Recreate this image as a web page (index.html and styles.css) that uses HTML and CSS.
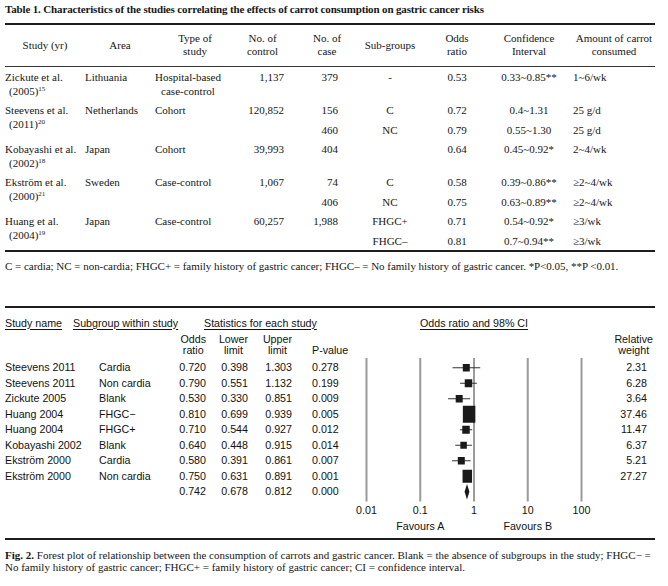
FILE: index.html
```html
<!DOCTYPE html>
<html>
<head>
<meta charset="utf-8">
<title>Carrot consumption and gastric cancer</title>
<link rel="stylesheet" href="styles.css">
</head>
<body>
<section class="t1">
  <h1 class="t1-title">Table 1. Characteristics of the studies correlating the effects of carrot consumption on gastric cancer risks</h1>
  <table class="t1-table">
    <colgroup>
      <col class="w-study"><col class="w-area"><col class="w-type"><col class="w-ctrl"><col class="w-case"><col class="w-sub"><col class="w-or"><col class="w-ci"><col class="w-amt">
    </colgroup>
    <thead>
      <tr>
        <th>Study (yr)</th>
        <th>Area</th>
        <th>Type of<br>study</th>
        <th>No. of<br>control</th>
        <th>No. of<br>case</th>
        <th>Sub-groups</th>
        <th>Odds<br>ratio</th>
        <th>Confidence<br>Interval</th>
        <th class="h-amt">Amount of carrot<br>consumed</th>
      </tr>
    </thead>
    <tbody>
      <tr>
        <td class="study">Zickute et al.<br><span class="yr">(2005)<sup>15</sup></span></td>
        <td>Lithuania</td>
        <td><span class="stack">Hospital-based<br>case-control</span></td>
        <td class="ctrl">1,137</td>
        <td class="case">379</td>
        <td class="c">-</td>
        <td class="c">0.53</td>
        <td class="c">0.33~0.85**</td>
        <td class="amt">1~6/wk</td>
      </tr>
      <tr>
        <td rowspan="2" class="study">Steevens et al.<br><span class="yr">(2011)<sup>20</sup></span></td>
        <td rowspan="2">Netherlands</td>
        <td rowspan="2">Cohort</td>
        <td rowspan="2" class="ctrl">120,852</td>
        <td class="case">156</td>
        <td class="c">C</td>
        <td class="c">0.72</td>
        <td class="c">0.4~1.31</td>
        <td class="amt">25 g/d</td>
      </tr>
      <tr>
        <td class="case">460</td>
        <td class="c">NC</td>
        <td class="c">0.79</td>
        <td class="c">0.55~1.30</td>
        <td class="amt">25 g/d</td>
      </tr>
      <tr>
        <td class="study">Kobayashi et al.<br><span class="yr">(2002)<sup>18</sup></span></td>
        <td>Japan</td>
        <td>Cohort</td>
        <td class="ctrl">39,993</td>
        <td class="case">404</td>
        <td class="c"></td>
        <td class="c">0.64</td>
        <td class="c">0.45~0.92*</td>
        <td class="amt">2~4/wk</td>
      </tr>
      <tr>
        <td rowspan="2" class="study">Ekström et al.<br><span class="yr">(2000)<sup>21</sup></span></td>
        <td rowspan="2">Sweden</td>
        <td rowspan="2">Case-control</td>
        <td rowspan="2" class="ctrl">1,067</td>
        <td class="case">74</td>
        <td class="c">C</td>
        <td class="c">0.58</td>
        <td class="c">0.39~0.86**</td>
        <td class="amt">≥2~4/wk</td>
      </tr>
      <tr>
        <td class="case">406</td>
        <td class="c">NC</td>
        <td class="c">0.75</td>
        <td class="c">0.63~0.89**</td>
        <td class="amt">≥2~4/wk</td>
      </tr>
      <tr>
        <td rowspan="2" class="study">Huang et al.<br><span class="yr">(2004)<sup>19</sup></span></td>
        <td rowspan="2">Japan</td>
        <td rowspan="2">Case-control</td>
        <td rowspan="2" class="ctrl">60,257</td>
        <td class="case">1,988</td>
        <td class="c">FHGC+</td>
        <td class="c">0.71</td>
        <td class="c">0.54~0.92*</td>
        <td class="amt">≥3/wk</td>
      </tr>
      <tr>
        <td class="case"></td>
        <td class="c">FHGC–</td>
        <td class="c">0.81</td>
        <td class="c">0.7~0.94**</td>
        <td class="amt">≥3/wk</td>
      </tr>
    </tbody>
  </table>
  <p class="t1-note">C = cardia; NC = non-cardia; FHGC+ = family history of gastric cancer; FHGC– = No family history of gastric cancer. *P&lt;0.05, **P &lt;0.01.</p>
</section>

<section class="fp">
  <div class="fp-h1">
    <span class="ul">Study name</span>
    <span class="ul">Subgroup within study</span>
    <span class="ul">Statistics for each study</span>
    <span class="ctr"><span class="ul">Odds ratio and 98% CI</span></span>
  </div>
  <div class="fp-h2">
    <div></div>
    <div></div>
    <div class="r"><span class="blk">Odds<br>ratio</span></div>
    <div class="r"><span class="blk">Lower<br>limit</span></div>
    <div class="r"><span class="blk">Upper<br>limit</span></div>
    <div class="p nw">P-value</div>
    <div></div>
    <div class="r"><span class="blk">Relative<br>weight</span></div>
  </div>
  <div class="fp-grid">
    <svg class="fp-plot" width="252" height="139.5" viewBox="0 0 252 139.5" aria-hidden="true">
      <g stroke="#9a9a9a" stroke-width="2">
        <line x1="18.5" y1="-2" x2="18.5" y2="141.5"/>
        <line x1="72.25" y1="-2" x2="72.25" y2="141.5"/>
        <line x1="179.75" y1="-2" x2="179.75" y2="141.5"/>
        <line x1="233.5" y1="-2" x2="233.5" y2="141.5"/>
      </g>
      <line x1="126" y1="-2" x2="126" y2="141.5" stroke="#666" stroke-width="1.3"/>
      <g stroke="#333" stroke-width="1">
        <line x1="104.5" y1="7.75" x2="132.2" y2="7.75"/>
        <line x1="112.1" y1="23.25" x2="128.9" y2="23.25"/>
        <line x1="100.1" y1="38.75" x2="122.2" y2="38.75"/>
        <line x1="117.6" y1="54.25" x2="124.5" y2="54.25"/>
        <line x1="111.8" y1="69.75" x2="124.2" y2="69.75"/>
        <line x1="107.3" y1="85.25" x2="123.9" y2="85.25"/>
        <line x1="104.1" y1="100.75" x2="122.5" y2="100.75"/>
        <line x1="115.3" y1="116.25" x2="123.3" y2="116.25"/>
      </g>
      <g fill="#1a1a1a">
        <rect x="114.8" y="4" width="7" height="7.5"/>
        <rect x="116.75" y="19.25" width="7.5" height="8"/>
        <rect x="107.7" y="35" width="7" height="7.5"/>
        <rect x="114.85" y="45.75" width="12.5" height="17"/>
        <rect x="114.25" y="65.75" width="7.5" height="8"/>
        <rect x="112.35" y="81.75" width="6.5" height="7"/>
        <rect x="109.8" y="97" width="7" height="7.5"/>
        <rect x="114.55" y="109.75" width="9.5" height="13"/>
        <polygon points="116.6,131.75 119,124 121.4,131.75 119,139.5"/>
      </g>
    </svg>

    <div>Steevens 2011</div><div>Cardia</div><div class="r">0.720</div><div class="r">0.398</div><div class="r">1.303</div><div class="p">0.278</div><div class="w">2.31</div>
    <div>Steevens 2011</div><div>Non cardia</div><div class="r">0.790</div><div class="r">0.551</div><div class="r">1.132</div><div class="p">0.199</div><div class="w">6.28</div>
    <div>Zickute 2005</div><div>Blank</div><div class="r">0.530</div><div class="r">0.330</div><div class="r">0.851</div><div class="p">0.009</div><div class="w">3.64</div>
    <div>Huang 2004</div><div>FHGC−</div><div class="r">0.810</div><div class="r">0.699</div><div class="r">0.939</div><div class="p">0.005</div><div class="w">37.46</div>
    <div>Huang 2004</div><div>FHGC+</div><div class="r">0.710</div><div class="r">0.544</div><div class="r">0.927</div><div class="p">0.012</div><div class="w">11.47</div>
    <div>Kobayashi 2002</div><div>Blank</div><div class="r">0.640</div><div class="r">0.448</div><div class="r">0.915</div><div class="p">0.014</div><div class="w">6.37</div>
    <div>Ekström 2000</div><div>Cardia</div><div class="r">0.580</div><div class="r">0.391</div><div class="r">0.861</div><div class="p">0.007</div><div class="w">5.21</div>
    <div>Ekström 2000</div><div>Non cardia</div><div class="r">0.750</div><div class="r">0.631</div><div class="r">0.891</div><div class="p">0.001</div><div class="w">27.27</div>
    <div></div><div></div><div class="r">0.742</div><div class="r">0.678</div><div class="r">0.812</div><div class="p">0.000</div><div class="w"></div>
  </div>
  <div class="fp-axis">
    <div></div>
    <div class="ticks"><span>0.01</span><span>0.1</span><span>1</span><span>10</span><span>100</span></div>
  </div>
  <div class="fp-axis fav">
    <div></div>
    <div class="favours"><span>Favours A</span><span>Favours B</span></div>
  </div>
</section>

<p class="caption"><b>Fig. 2.</b> Forest plot of relationship between the consumption of carrots and gastric cancer. Blank = the absence of subgroups in the study; FHGC− =<br>No family history of gastric cancer; FHGC+ = family history of gastric cancer; CI = confidence interval.</p>
</body>
</html>
```

FILE: styles.css
```css
* { box-sizing: border-box; }
html, body { margin: 0; background: #fff; }
body {
  width: 668px;
  padding: 2px 13px 0 5px;
  color: #161616;
  font-family: "Liberation Serif", "Times New Roman", serif;
}

/* ---------- Table 1 ---------- */
.t1-title {
  font-size: 11px;
  font-weight: bold;
  line-height: 14px;
  letter-spacing: -0.15px;
  margin: 0 0 7px;
}
.t1-table {
  width: 650px;
  table-layout: fixed;
  border-collapse: collapse;
  font-size: 11px;
  line-height: 13.5px;
  border-top: 2px solid #1e1e1e;
  border-bottom: 2px solid #1e1e1e;
}
.w-study { width: 80px; }
.w-area { width: 70px; }
.w-type { width: 80px; }
.w-ctrl { width: 55px; }
.w-case { width: 74px; }
.w-sub { width: 52px; }
.w-or { width: 82px; }
.w-ci { width: 62px; }
.w-amt { width: 95px; }

.t1-table th {
  font-weight: normal;
  line-height: 13px;
  padding: 7px 0 8px;
  text-align: center;
  vertical-align: middle;
  border-bottom: 1px solid #333;
}
.t1-table th.h-amt { padding-left: 13px; }
.t1-table td {
  padding: 4px 0 2px;
  vertical-align: top;
  text-align: left;
  white-space: nowrap;
}
.t1-table td.ctrl { text-align: right; padding-right: 6px; }
.t1-table td.case { text-align: right; padding-right: 26px; }
.t1-table td.c { text-align: center; }
.t1-table td.amt { padding-left: 13px; }
.yr { padding-left: 4px; }
.stack { display: inline-block; text-align: center; }
sup {
  font-size: 7px;
  line-height: 0;
  vertical-align: 4px;
}
.t1-note {
  margin: 8px 0 0;
  font-size: 11px;
  line-height: 13px;
  letter-spacing: -0.03px;
}

/* ---------- Forest plot ---------- */
.fp {
  margin-top: 33px;
  padding-top: 8.5px;
  padding-bottom: 5.5px;
  border-top: 2px solid #1e1e1e;
  border-bottom: 2px solid #1e1e1e;
  font-family: "Liberation Sans", Arial, sans-serif;
  font-size: 10.7px;
  color: #111;
}
.fp-h1 {
  display: grid;
  grid-template-columns: 68px 131px 144px 252px;
  line-height: 13px;
}
.ul { text-decoration: underline; text-underline-offset: 1.5px; }
.ctr { text-align: center; }

.fp-h2, .fp-grid {
  display: grid;
  grid-template-columns: 94px 61px 46px 42px 44px 56px 252px 53px;
}
.fp-h2 {
  margin-top: 4px;
  line-height: 11px;
  align-items: end;
}
.nw { white-space: nowrap; }
.blk { display: inline-block; text-align: center; }
.fp-grid {
  margin-top: 4.75px;
  grid-auto-rows: 15.5px;
  line-height: 15.5px;
  white-space: nowrap;
}
.fp-plot {
  grid-column: 7;
  grid-row: 1 / span 9;
  overflow: visible;
  display: block;
}
.r { text-align: right; }
.p { padding-left: 20px; }
.w { text-align: right; padding-right: 6px; }

.fp-axis {
  display: grid;
  grid-template-columns: 343px 252px;
  margin-top: 3.75px;
  line-height: 13px;
}
.fp-axis.fav { margin-top: 3px; }
.ticks { display: flex; margin-left: -8.375px; }
.ticks span { width: 53.75px; flex: none; text-align: center; }
.favours { display: flex; margin-left: 18.5px; }
.favours span { width: 107.5px; flex: none; text-align: center; }

.caption {
  margin: 8.75px 0 0;
  font-size: 11px;
  line-height: 12.5px;
}
```
